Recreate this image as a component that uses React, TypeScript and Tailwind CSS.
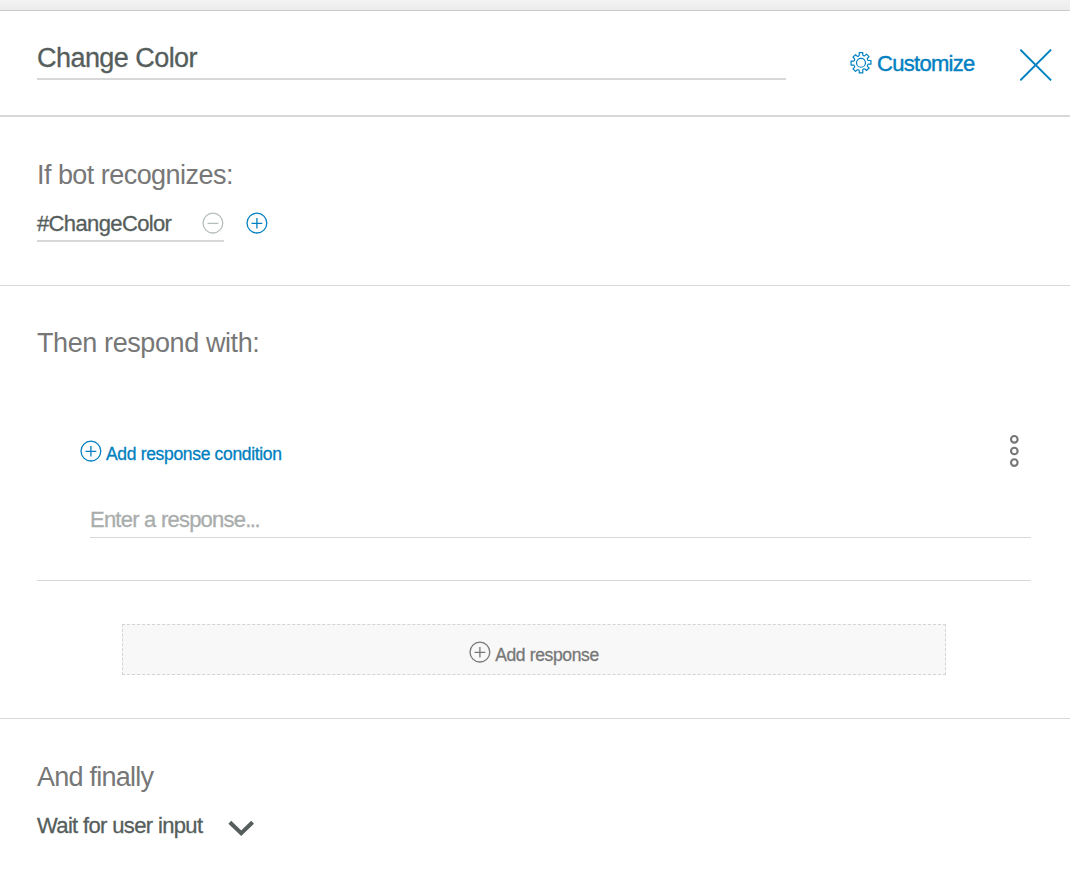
import React from "react";

type IconProps = { className?: string };

function CircleIcon({ minus = false, className = "" }: IconProps & { minus?: boolean }) {
  return (
    <svg viewBox="0 0 22 22" className={`size-[22px] shrink-0 ${className}`} fill="none" stroke="currentColor" strokeWidth="1.3">
      <circle cx="10.9" cy="11.1" r="9.9" />
      <path d={minus ? "M5.5 11.4h11" : "M5.5 11.3h10.8M10.9 6v10.6"} />
    </svg>
  );
}

function GearIcon() {
  return (
    <svg viewBox="0.4 0.5 21.2 21.2" className="mt-[1px] size-[22px] shrink-0" fill="none" stroke="currentColor" strokeWidth="1.15" strokeLinejoin="round">
      <path d="M9.3 1.1h3.4v2.1q0 .5.5.7l.7.3q.5.2.9-.2l1.5-1.4 2.5 2.4-1.5 1.5q-.4.4-.2.9l.4.8q.2.5.7.5H20.6v3.5H18.2q-.5 0-.7.5l-.4.8q-.2.5.2.9l1.5 1.5-2.5 2.4-1.5-1.4q-.4-.4-.9-.2l-.7.3q-.5.2-.5.7V20.7H9.3v-2.1q0-.5-.5-.7l-.7-.3q-.5-.2-.9.2l-1.5 1.4-2.5-2.4 1.5-1.5q.4-.4.2-.9l-.4-.8q-.2-.5-.7-.5H1.4V9.2H3.8q.5 0 .7-.5l.4-.8q.2-.5-.2-.9L3.2 5.5 5.7 3.1l1.5 1.4q.4.4.9.2l.7-.3q.5-.2.5-.7z" />
      <circle cx="11" cy="10.9" r="4.3" />
    </svg>
  );
}

function CloseIcon() {
  return (
    <svg viewBox="0 0 32 32" className="size-8" fill="none" stroke="currentColor" strokeWidth="1.9">
      <path d="M.3.6l30.8 30.8M31.1.6L.3 31.4" />
    </svg>
  );
}

function DotsIcon() {
  return (
    <svg viewBox="0 0 10 34" className="h-[34px] w-[10px]" fill="none" stroke="currentColor" strokeWidth="2.1">
      <circle cx="5.3" cy="5.3" r="3.3" />
      <circle cx="5.3" cy="17" r="3.3" />
      <circle cx="5.3" cy="28.6" r="3.3" />
    </svg>
  );
}

function Heading({ children, className }: { children: React.ReactNode; className: string }) {
  return <h2 className={`h-[30px] text-[27px] leading-[30px] whitespace-nowrap text-[#777777] ${className}`}>{children}</h2>;
}

export default function App() {
  return (
    <div className="flex h-[884px] w-[1070px] flex-col overflow-hidden bg-white font-['Liberation_Sans',Arial,sans-serif] text-[#555e5c]">
      <div className="h-[11px] shrink-0 border-b border-[#cbcbcb] bg-linear-to-b from-[#f3f3f3] to-[#ececec]" />

      <header className="flex h-[106px] shrink-0 items-start border-b-2 border-[#d8d8d8] pl-[37px]">
        <div className="mt-[32px] h-[37px] w-[749px] border-b-2 border-[#d8d8d8]">
          <h1 className="text-[27px] leading-[30px] tracking-[-0.55px] [-webkit-text-stroke:0.3px_currentColor]">Change Color</h1>
        </div>
        <button className="mt-[40px] ml-[64px] flex w-[125px] items-start gap-[5px] text-[#0080c0]">
          <GearIcon />
          <span className="text-[22px] leading-[26px] tracking-[-0.7px] [-webkit-text-stroke:0.4px_currentColor]">Customize</span>
        </button>
        <button className="mt-[38px] ml-[45px] text-[#0080c0]">
          <CloseIcon />
        </button>
      </header>

      <section className="h-[169px] shrink-0 border-b border-[#d8d8d8] pt-[43px] pl-[37px]">
        <Heading className="tracking-[-0.54px]">If bot recognizes:</Heading>
        <div className="mt-[20px] flex items-start">
          <div className="flex h-[32px] w-[187px] justify-between border-b-2 border-[#d8d8d8]">
            <span className="mt-[1px] text-[22px] leading-[26px] tracking-[-0.63px] [-webkit-text-stroke:0.3px_currentColor]">#ChangeColor</span>
            <CircleIcon minus className="mt-[2px] text-[#b6bebc]" />
          </div>
          <CircleIcon className="mt-[2px] ml-[22px] text-[#0080c0]" />
        </div>
      </section>

      <section className="flex h-[433px] shrink-0 flex-col border-b border-[#d8d8d8] pt-[42px] pl-[37px]">
        <Heading className="tracking-[-0.4px]">Then respond with:</Heading>
        <div className="mt-[76px] flex h-[147px] w-[994px] flex-col border-b border-[#d8d8d8] pl-[43px]">
          <div className="flex h-[34px] items-start justify-between pr-[12px]">
            <button className="mt-[6px] flex items-start gap-[4px] text-[#0080c0]">
              <CircleIcon />
              <span className="mt-[4px] text-[17.5px] leading-[20px] tracking-[-0.33px] [-webkit-text-stroke:0.3px_currentColor]">Add response condition</span>
            </button>
            <div className="text-[#777777]">
              <DotsIcon />
            </div>
          </div>
          <div className="mt-[39px] ml-[10px] h-[31px] border-b border-[#d8d8d8] text-[22px] leading-[26px] tracking-[-0.77px] text-[#a9adac] [-webkit-text-stroke:0.3px_currentColor]">
            Enter a response<span className="tracking-[-1.5px]">...</span>
          </div>
        </div>
        <button className="mt-[43px] ml-[85px] flex h-[51px] w-[824px] items-start justify-center gap-[4px] border border-dashed border-[#d4d4d4] bg-[#f8f8f8] pt-[16px] text-[#777777]">
          <CircleIcon />
          <span className="mt-[4px] text-[17.5px] leading-[20px] tracking-[-0.36px] [-webkit-text-stroke:0.3px_currentColor]">Add response</span>
        </button>
      </section>

      <section className="pt-[43px] pl-[37px]">
        <Heading className="tracking-[-0.75px]">And finally</Heading>
        <div className="mt-[20px] flex items-start">
          <span className="mt-[1px] w-[191px] text-[22px] leading-[26px] tracking-[-0.65px] whitespace-nowrap [-webkit-text-stroke:0.3px_currentColor]">Wait for user input</span>
          <svg viewBox="0 0 27 17" className="mt-[8px] h-[17px] w-[27px]" fill="none" stroke="currentColor" strokeWidth="4">
            <path d="M1.8 2.2l11.4 11L24.6 2.2" />
          </svg>
        </div>
      </section>
    </div>
  );
}
